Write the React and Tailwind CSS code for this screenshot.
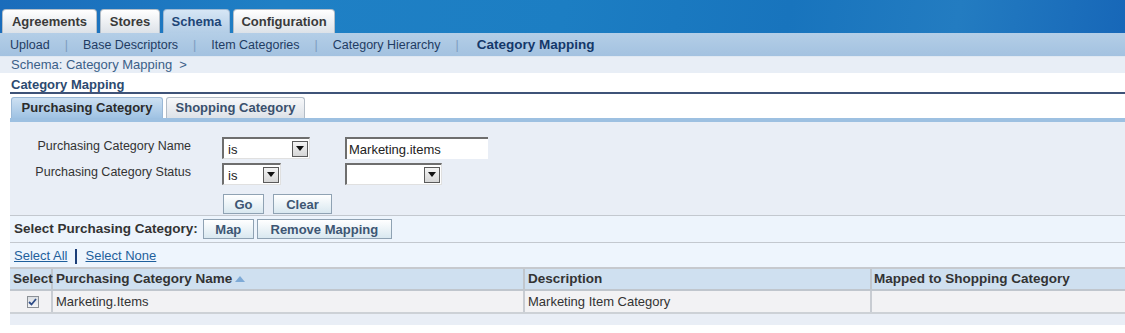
const topTabs = [
  { label: "Agreements", w: "w-[95px]" },
  { label: "Stores", w: "w-[60px]" },
  { label: "Schema", w: "w-[67px]", active: true },
  { label: "Configuration", w: "w-[102px]" },
];

const subNav = ["Upload", "Base Descriptors", "Item Categories", "Category Hierarchy", "Category Mapping"];

function Select({ width, value }) {
  return (
    <div className={`${width} h-[22px] flex items-center bg-white border-t-2 border-l-2 border-[#6e6e6e] border-r border-b border-r-[#e0e0e0] border-b-[#e0e0e0]`}>
      <span className="flex-1 pl-[4px] text-[13px] text-[#222] leading-none pt-[2px]">{value}</span>
      <div className="w-[16px] h-[16px] mr-[1px] flex items-center justify-center bg-[linear-gradient(#f4f4f4,#d6d6d6)] border border-[#5a5a5a]">
        <svg width="8" height="5" viewBox="0 0 8 5">
          <path d="M0 0H8L4 5Z" fill="#111" />
        </svg>
      </div>
    </div>
  );
}

function Button({ children, width }) {
  return (
    <button className={`${width} h-[20px] flex items-center justify-center bg-[linear-gradient(#ffffff,#d9e8f0)] border border-[#8fa2b3] text-[13px] font-bold text-[#3d5673] leading-none`}>
      {children}
    </button>
  );
}

function Checkbox() {
  return (
    <div className="w-[12px] h-[12px] border border-[#8b9096] bg-[linear-gradient(#dcdfe3,#f4f5f7)] flex items-center justify-center">
      <svg width="9" height="8" viewBox="0 0 9 8">
        <path d="M1 4 L3.5 6.5 L8 1" stroke="#2e4c87" strokeWidth="1.8" fill="none" />
      </svg>
    </div>
  );
}

export default function App() {
  return (
    <div className="w-[1125px] h-[333px] overflow-hidden bg-white font-['Liberation_Sans',Arial,sans-serif]">
      {/* header with top-level tabs */}
      <div className="h-[33px] flex items-end pl-[2px] gap-[3px] bg-[linear-gradient(100deg,#1a6cbb_0%,#1f80c5_25%,#1c7ec3_50%,#1874bd_70%,#237cc1_85%,#1767b8_100%)]">
        {topTabs.map((t) => (
          <div
            key={t.label}
            className={`${t.w} h-[24px] flex items-center justify-center rounded-t-[4px] border border-b-0 text-[13px] font-bold ${
              t.active
                ? "bg-[linear-gradient(#d6e6f5,#b3cde6)] border-[#9fb9d3] text-[#1d4577]"
                : "bg-[linear-gradient(#ffffff,#dde2e8)] border-[#b4bec8] text-[#3a3a3a]"
            }`}
          >
            {t.label}
          </div>
        ))}
      </div>

      {/* sub navigation */}
      <div className="h-[23px] flex items-center pl-[10px] bg-[linear-gradient(#b4cee7,#a3c2e0)] text-[12.5px] pt-[1px]">
        {subNav.map((s, i) => (
          <div key={s} className="flex items-center">
            {i > 0 && <span className="mx-[15px] text-[#7c9cc0]">|</span>}
            <span className={i === subNav.length - 1 ? "font-bold text-[13.5px] ml-[3px] text-[#14386a]" : "text-[#1f3c63]"}>{s}</span>
          </div>
        ))}
      </div>

      {/* breadcrumb */}
      <div className="h-[17px] border-t border-[#dfe8f2] bg-[#e8eef6] pl-[11px] text-[13px] leading-[16px] text-[#3b6088]">
        Schema: Category Mapping&nbsp;&nbsp;&gt;
      </div>

      <div className="ml-[10px]">
        {/* page title */}
        <div className="h-[21px] border-b-2 border-[#3f5378] flex items-end pl-[1px] text-[13px] leading-[15px] font-bold text-[#2c4a70]">
          Category Mapping
        </div>

        {/* sub tabs */}
        <div className="h-[24px] flex items-end gap-[3px] pl-[1px]">
          <div className="w-[152px] h-[21px] flex items-center justify-center rounded-t-[3px] border border-b-0 border-[#9ab8d6] bg-[linear-gradient(#cde0f2,#9fc2e3)] text-[13px] font-bold text-[#2b2b2b]">
            Purchasing Category
          </div>
          <div className="w-[139px] h-[21px] flex items-center justify-center rounded-t-[3px] border border-b-0 border-[#b3bcc6] bg-[linear-gradient(#f7f8fa,#dde2e8)] text-[13px] font-bold text-[#3a506d]">
            Shopping Category
          </div>
        </div>
        <div className="h-[4px] bg-[#9dc0e1]"></div>

        {/* search region */}
        <div className="h-[93px] bg-[#e9eef6] pt-[15px] text-[12.5px] text-[#333]">
          <div className="flex items-center h-[22px]">
            <div className="w-[182px] text-right pr-[1px] -mt-[3px]">Purchasing Category Name</div>
            <div className="ml-[30px] w-[123px]">
              <Select width="w-[88px]" value="is" />
            </div>
            <div className="w-[143px] h-[22px] flex items-center bg-white border-t-2 border-l-2 border-[#6e6e6e] pl-[2px] pt-[1px] text-[13px] text-[#222]">
              Marketing.items
            </div>
          </div>
          <div className="flex items-center h-[22px] mt-[4px]">
            <div className="w-[182px] text-right pr-[1px] -mt-[3px]">Purchasing Category Status</div>
            <div className="ml-[30px] w-[123px]">
              <Select width="w-[59px]" value="is" />
            </div>
            <Select width="w-[97px]" value="" />
          </div>
          <div className="flex gap-[9px] ml-[213px] mt-[9px]">
            <Button width="w-[41px]">Go</Button>
            <Button width="w-[59px]">Clear</Button>
          </div>
        </div>

        {/* select purchasing category bar */}
        <div className="h-[27px] border-t border-[#c3c8cf] bg-[#edf4fc] flex items-center pl-[4px] gap-[3px]">
          <span className="text-[13.5px] font-bold text-[#333] mr-[2px]">Select Purchasing Category:</span>
          <Button width="w-[51px]">Map</Button>
          <Button width="w-[135px]">Remove Mapping</Button>
        </div>

        {/* select all / none */}
        <div className="h-[25px] border-t border-[#c3c8cf] bg-[#eef5fd] flex items-center pl-[4px] pt-[2px] text-[13px]">
          <span className="text-[#1e5f9c] underline">Select All</span>
          <span className="w-[2px] h-[15px] bg-[#1c3e78] mx-[8px]"></span>
          <span className="text-[#1e5f9c] underline">Select None</span>
        </div>

        {/* results table */}
        <div className="border-t-2 border-[#c6c9ce] text-[13px]">
          <div className="h-[22px] flex bg-[#cfe0f0] border-b-2 border-[#c0c6cd] font-bold text-[13.5px] text-[#333]">
            <div className="w-[43px] flex items-center pl-[3px] border-r-2 border-[#c0c6cd]">Select</div>
            <div className="w-[472px] flex items-center pl-[3px] border-r-2 border-[#c0c6cd]">
              Purchasing Category Name
              <svg className="ml-[3px]" width="10" height="6" viewBox="0 0 10 6">
                <path d="M0 6H10L5 0Z" fill="#7eaad6" />
              </svg>
            </div>
            <div className="w-[347px] flex items-center pl-[3px] border-r-2 border-[#c0c6cd]">Description</div>
            <div className="flex-1 flex items-center pl-[2px]">Mapped to Shopping Category</div>
          </div>
          <div className="h-[23px] flex bg-[#f2f2f4] border-b-2 border-[#cdd1d6] text-[#333]">
            <div className="w-[43px] flex items-center justify-center pl-[4px] border-r-2 border-[#c8ccd2]">
              <Checkbox />
            </div>
            <div className="w-[472px] flex items-center pl-[3px] border-r-2 border-[#c8ccd2]">Marketing.Items</div>
            <div className="w-[347px] flex items-center pl-[3px] border-r-2 border-[#c8ccd2]">Marketing Item Category</div>
            <div className="flex-1"></div>
          </div>
          <div className="h-[11px] bg-[#e9eef6]"></div>
        </div>
      </div>
    </div>
  );
}
